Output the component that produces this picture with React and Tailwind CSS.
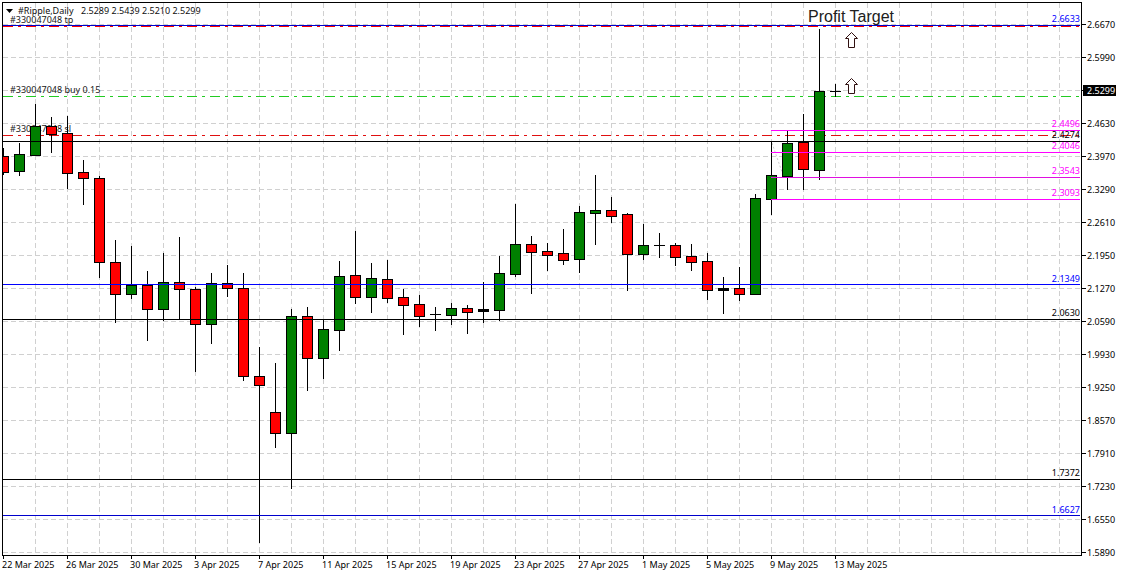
import React from "react";

// [bodyTop, bodyBottom, wickTop, wickBottom, colour] in page pixels, one candle every 16px from x=3
const candles = [
  [156, 172, 148, 174, "r"],
  [154, 171, 143, 175, "g"],
  [126, 155, 104, 155, "g"],
  [126, 134, 117, 152, "r"],
  [133, 173, 116, 188, "r"],
  [172, 178, 160, 204, "r"],
  [178, 262, 176, 277, "r"],
  [262, 294, 240, 322, "r"],
  [285, 294, 246, 298, "g"],
  [285, 309, 271, 340, "r"],
  [282, 309, 253, 320, "g"],
  [282, 289, 237, 318, "r"],
  [289, 324, 287, 371, "r"],
  [283, 324, 273, 343, "g"],
  [283, 288, 265, 296, "r"],
  [288, 376, 273, 380, "r"],
  [376, 385, 347, 542, "r"],
  [412, 433, 363, 447, "r"],
  [316, 433, 309, 488, "g"],
  [316, 358, 307, 390, "r"],
  [329, 358, 320, 378, "g"],
  [276, 330, 261, 350, "g"],
  [275, 297, 231, 303, "r"],
  [278, 297, 263, 312, "g"],
  [279, 298, 260, 302, "r"],
  [297, 305, 289, 334, "r"],
  [304, 316, 295, 326, "r"],
  [314, 314, 307, 330, "g"],
  [308, 315, 303, 324, "g"],
  [308, 312, 305, 333, "r"],
  [309, 311, 282, 322, "k"],
  [273, 310, 256, 320, "g"],
  [244, 274, 204, 276, "g"],
  [244, 252, 236, 293, "r"],
  [251, 255, 243, 270, "r"],
  [253, 260, 229, 264, "r"],
  [212, 259, 206, 272, "g"],
  [210, 213, 175, 244, "g"],
  [210, 216, 197, 222, "r"],
  [214, 254, 213, 290, "r"],
  [245, 254, 224, 259, "g"],
  [245, 245, 233, 257, "g"],
  [245, 257, 243, 265, "r"],
  [256, 262, 244, 270, "r"],
  [261, 290, 253, 299, "r"],
  [288, 290, 277, 313, "k"],
  [288, 294, 267, 300, "r"],
  [198, 294, 194, 294, "g"],
  [175, 199, 142, 214, "g"],
  [143, 176, 131, 189, "g"],
  [142, 169, 114, 189, "r"],
  [91, 170, 29, 179, "g"],
  [91, 91, 84, 96, "g"],
];

const fills = { r: "#ff0000", g: "#008000", k: "#000000" };

const prices = [
  "2.6670", "2.5990", "2.5299", "2.4630", "2.3970", "2.3290", "2.2610", "2.1950", "2.1270",
  "2.0590", "1.9930", "1.9250", "1.8570", "1.7910", "1.7230", "1.6550", "1.5890",
];

const dates = [
  "22 Mar 2025", "26 Mar 2025", "30 Mar 2025", "3 Apr 2025", "7 Apr 2025", "11 Apr 2025", "15 Apr 2025",
  "19 Apr 2025", "23 Apr 2025", "27 Apr 2025", "1 May 2025", "5 May 2025", "9 May 2025", "13 May 2025",
];

// trade lines sit behind the candles, the drawn levels in front of them
const tradeLines = [
  { y: 26, color: "#ff0000", width: 2 },
  { y: 96.5, color: "#22cc22", width: 1 },
  { y: 135.5, color: "#e01010", width: 1 },
];

const tradeLabels = [
  { y: 23, text: "#330047048 tp" },
  { y: 93, text: "#330047048 buy 0.15" },
  { y: 132, text: "#330047048 sl" },
];

const levels = [
  { y: 25, x: 3, color: "#0000cc" },
  { y: 141, x: 3, color: "#000000" },
  { y: 284, x: 3, color: "#0000ff" },
  { y: 319, x: 3, color: "#000000" },
  { y: 479, x: 3, color: "#000000" },
  { y: 515, x: 3, color: "#0000cc" },
  { y: 130, x: 771, color: "#ff00ff" },
  { y: 152, x: 771, color: "#ff00ff" },
  { y: 177, x: 771, color: "#e010e0" },
  { y: 199, x: 771, color: "#ff00ff" },
];

const levelLabels = [
  { y: 22, text: "2.6633", fill: "fill-[#0000ff]" },
  { y: 127, text: "2.4496", fill: "fill-[#ff00ff]" },
  { y: 138, text: "2.4274", fill: "fill-black" },
  { y: 149, text: "2.4046", fill: "fill-[#ff00ff]" },
  { y: 174, text: "2.3543", fill: "fill-[#ff00ff]" },
  { y: 196, text: "2.3093", fill: "fill-[#ff00ff]" },
  { y: 282, text: "2.1349", fill: "fill-[#0000ff]" },
  { y: 316, text: "2.0630", fill: "fill-black" },
  { y: 476, text: "1.7372", fill: "fill-black" },
  { y: 513, text: "1.6627", fill: "fill-[#0000ff]" },
];

function Candle({ data, index }) {
  const [top, bottom, wickTop, wickBottom, color] = data;
  const x = 3 + index * 16;
  return (
    <g>
      <line x1={x + 0.5} x2={x + 0.5} y1={wickTop} y2={wickBottom + 1} stroke="#000" />
      {top === bottom ? (
        <line x1={x - 5} x2={x + 6} y1={top + 0.5} y2={top + 0.5} stroke="#000" />
      ) : (
        <rect x={x - 4.5} y={top + 0.5} width={10} height={bottom - top} fill={fills[color]} stroke="#000" />
      )}
    </g>
  );
}

function UpArrow({ top }) {
  const p = (x, y) => `${x},${top + y}`;
  return (
    <polygon
      points={[p(851.5, 0.5), p(857.5, 6.5), p(854.5, 6.5), p(854.5, 15.5), p(848.5, 15.5), p(848.5, 6.5), p(845.5, 6.5)].join(" ")}
      fill="#fff"
      stroke="#301010"
    />
  );
}

function Chart() {
  return (
    <svg width="1078" height="552" viewBox="3 3 1078 552" className="block text-[9px]">
      <g shapeRendering="crispEdges">
        {prices.map((_, k) => (
          <line key={k} x1="3" x2="1081" y1={24.5 + k * 33} y2={24.5 + k * 33} stroke="#d0d0d0" strokeDasharray="5 3" />
        ))}
        {Array.from({ length: 34 }, (_, k) => (
          <line key={k} x1={35.5 + k * 32} x2={35.5 + k * 32} y1="3" y2="555" stroke="#d0d0d0" strokeDasharray="5 3" />
        ))}
      </g>

      {tradeLabels.map((l) => (
        <text key={l.text} x="10" y={l.y} className="fill-[#202020]">{l.text}</text>
      ))}
      <g shapeRendering="crispEdges">
        {tradeLines.map((l) => (
          <line key={l.y} x1="3" x2="1081" y1={l.y} y2={l.y} stroke={l.color} strokeWidth={l.width} strokeDasharray="10 5 3 5" />
        ))}
      </g>
      <line x1="772" y1="143" x2="783" y2="175" stroke="#cccccc" strokeDasharray="2 2" />

      <g shapeRendering="crispEdges">
        {candles.map((c, i) => (
          <Candle key={i} data={c} index={i} />
        ))}
        {levels.map((l) => (
          <line key={l.y} x1={l.x} x2="1080" y1={l.y + 0.5} y2={l.y + 0.5} stroke={l.color} />
        ))}
      </g>

      {levelLabels.map((l) => (
        <text key={l.text} x="1080" y={l.y} textAnchor="end" className={l.fill}>{l.text}</text>
      ))}

      <polygon points="6,9 13,9 9.5,13" fill="#000" />
      <text x="18" y="14" className="fill-[#101010]">#Ripple,Daily</text>
      <text x="81" y="14" className="fill-[#101010]">2.5289 2.5439 2.5210 2.5299</text>

      <text x="808" y="22" className="fill-[#202020] font-['Liberation_Sans',sans-serif] text-[16px]">Profit Target</text>
      <UpArrow top={32} />
      <UpArrow top={78} />
    </svg>
  );
}

export default function App() {
  return (
    <div className="w-[1122px] h-[576px] bg-white overflow-hidden pt-[2px] pl-[2px] font-['Noto_Sans',sans-serif] text-[9px] text-black">
      <div className="flex h-[554px]">
        <div className="w-[1080px] h-[554px] border border-black">
          <Chart />
        </div>

        {/* price axis */}
        <div className="pt-[6px] w-[40px] flex flex-col">
          {prices.map((price) => (
            <div key={price} className="h-[33px] shrink-0 flex items-center">
              <div className="w-[4px] h-px bg-black" />
              {price === "2.5299" ? (
                <span className="-ml-[3px] w-[33px] h-[11px] pl-[4px] bg-black text-white leading-[11px]">{price}</span>
              ) : (
                <span className="ml-[1px] leading-[11px]">{price}</span>
              )}
            </div>
          ))}
        </div>
      </div>

      {/* time axis */}
      <div className="flex pl-[1px]">
        {dates.map((date) => (
          <div key={date} className="w-[64px] shrink-0 flex flex-col">
            <div className="w-px h-[3px] bg-black" />
            <span className="-ml-[1px] leading-[11px] whitespace-nowrap">{date}</span>
          </div>
        ))}
      </div>
    </div>
  );
}
